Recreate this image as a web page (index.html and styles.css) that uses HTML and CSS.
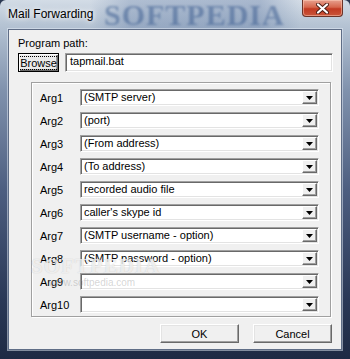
FILE: index.html
```html
<!DOCTYPE html>
<html lang="en">
<head>
<meta charset="UTF-8">
<meta name="viewport" content="width=device-width, initial-scale=1.0">
<title>Mail Forwarding</title>
<link rel="stylesheet" href="styles.css">
</head>
<body>
    <div class="window">
        <div class="titlebar">
            <span class="title">Mail Forwarding</span>
            <span class="title-mark">SOFTPEDIA</span>
            <button class="close" type="button">
                <svg width="13" height="11" viewBox="0 0 13 11">
                    <path d="M2 1.5 L11 9.5 M11 1.5 L2 9.5" stroke="#4a1c14" stroke-width="4" stroke-linecap="round"/>
                    <path d="M2 1.5 L11 9.5 M11 1.5 L2 9.5" stroke="#ffffff" stroke-width="2.2" stroke-linecap="round"/>
                </svg>
            </button>
        </div>

        <div class="client">
            <div class="path-label">Program path:</div>
            <div class="path-row">
                <button class="browse" type="button"><span>Browse</span></button>
                <div class="field">tapmail.bat</div>
            </div>

            <div class="group">
                <div class="arg-row"><span class="arg-label">Arg1</span><div class="combo"><span class="combo-text">(SMTP server)</span><span class="drop"><svg width="7" height="4" viewBox="0 0 7 4"><path d="M0 0 H7 L3.5 4 Z" fill="#000"/></svg></span></div></div>
                <div class="arg-row"><span class="arg-label">Arg2</span><div class="combo"><span class="combo-text">(port)</span><span class="drop"><svg width="7" height="4" viewBox="0 0 7 4"><path d="M0 0 H7 L3.5 4 Z" fill="#000"/></svg></span></div></div>
                <div class="arg-row"><span class="arg-label">Arg3</span><div class="combo"><span class="combo-text">(From address)</span><span class="drop"><svg width="7" height="4" viewBox="0 0 7 4"><path d="M0 0 H7 L3.5 4 Z" fill="#000"/></svg></span></div></div>
                <div class="arg-row"><span class="arg-label">Arg4</span><div class="combo"><span class="combo-text">(To address)</span><span class="drop"><svg width="7" height="4" viewBox="0 0 7 4"><path d="M0 0 H7 L3.5 4 Z" fill="#000"/></svg></span></div></div>
                <div class="arg-row"><span class="arg-label">Arg5</span><div class="combo"><span class="combo-text">recorded audio file</span><span class="drop"><svg width="7" height="4" viewBox="0 0 7 4"><path d="M0 0 H7 L3.5 4 Z" fill="#000"/></svg></span></div></div>
                <div class="arg-row"><span class="arg-label">Arg6</span><div class="combo"><span class="combo-text">caller's skype id</span><span class="drop"><svg width="7" height="4" viewBox="0 0 7 4"><path d="M0 0 H7 L3.5 4 Z" fill="#000"/></svg></span></div></div>
                <div class="arg-row"><span class="arg-label">Arg7</span><div class="combo"><span class="combo-text">(SMTP username - option)</span><span class="drop"><svg width="7" height="4" viewBox="0 0 7 4"><path d="M0 0 H7 L3.5 4 Z" fill="#000"/></svg></span></div></div>
                <div class="arg-row"><span class="arg-label">Arg8</span><div class="combo"><span class="combo-text">(SMTP password - option)</span><span class="drop"><svg width="7" height="4" viewBox="0 0 7 4"><path d="M0 0 H7 L3.5 4 Z" fill="#000"/></svg></span></div></div>
                <div class="arg-row"><span class="arg-label">Arg9</span><div class="combo"><span class="combo-text"></span><span class="drop"><svg width="7" height="4" viewBox="0 0 7 4"><path d="M0 0 H7 L3.5 4 Z" fill="#000"/></svg></span></div></div>
                <div class="arg-row"><span class="arg-label">Arg10</span><div class="combo"><span class="combo-text"></span><span class="drop"><svg width="7" height="4" viewBox="0 0 7 4"><path d="M0 0 H7 L3.5 4 Z" fill="#000"/></svg></span></div></div>
            </div>

            <div class="actions">
                <button class="btn" type="button">OK</button>
                <button class="btn" type="button">Cancel</button>
            </div>

            <!-- site watermark drawn over the dialog -->
            <span class="mark-big">SOFTPEDIA</span>
            <span class="mark-url">www.softpedia.com</span>
        </div>
    </div>
</body>
</html>
```

FILE: styles.css
```css
html, body {
    margin: 0;
    padding: 0;
}

body {
    width: 350px;
    height: 359px;
    overflow: hidden;
    font-family: "Liberation Sans", Arial, sans-serif;
    font-size: 11px;
    color: #000;
    background: #2b3852;
}

.window {
    width: 350px;
    height: 359px;
    box-sizing: border-box;
    padding: 0 8px 9px 8px;
    display: flex;
    flex-direction: column;
    border-radius: 6px 6px 0 0;
    background: linear-gradient(180deg, #d3dce6 0px, #b6c4d4 24px, #8092ad 90px, #4d5e80 190px, #2a3856 300px, #1e2a44 359px);
}

.titlebar {
    position: relative;
    height: 29px;
    display: flex;
    align-items: flex-start;
    background: linear-gradient(90deg, rgba(255, 255, 255, 0) 90px, rgba(70, 100, 150, 0.25) 130px, rgba(70, 100, 150, 0.3) 260px, rgba(255, 255, 255, 0) 300px);
    margin: 0 -8px;
    padding: 0 8px;
}

.title {
    margin-top: 7px;
    font-size: 12px;
    line-height: 14px;
    text-shadow: 0 0 4px #fff, 0 0 8px #fff;
    position: relative;
    z-index: 1;
}

.title-mark {
    position: absolute;
    left: 104px;
    top: 1px;
    font-family: "Liberation Serif", serif;
    font-weight: bold;
    font-size: 30px;
    line-height: 28px;
    letter-spacing: 1px;
    color: rgba(45, 80, 135, 0.45);
    filter: blur(0.8px);
}

.close {
    position: relative;
    margin-left: auto;
    margin-right: -1px;
    width: 41px;
    height: 17px;
    padding: 0;
    display: flex;
    align-items: center;
    justify-content: center;
    border: 1px solid #6b3328;
    border-top: none;
    border-radius: 0 0 4px 4px;
    background: linear-gradient(180deg, #e7a08e 0%, #d6674d 45%, #c23a22 55%, #c9553a 100%);
    box-shadow: inset 0 0 0 1px rgba(255, 210, 190, 0.5);
}

.client {
    position: relative;
    flex: 1;
    box-sizing: border-box;
    padding: 7px 8px 0 9px;
    background: #f0f0f0;
    border: 1px solid #5f6d86;
    box-shadow: 0 0 0 1px rgba(230, 238, 248, 0.5);
}

.path-label {
    line-height: 13px;
}

.path-row {
    display: flex;
    gap: 6px;
    margin-top: 3px;
    height: 19px;
}

.browse {
    width: 41px;
    height: 19px;
    padding: 0;
    font: inherit;
    background: #ebebeb;
    border: 1px solid #000;
    box-shadow: inset 1px 1px 0 #fff, inset -1px -1px 0 #696969, inset -2px -2px 0 #a0a0a0;
}

.browse span {
    outline: 1px dotted #000;
    padding: 0 1px;
}

.field {
    flex: 1;
    box-sizing: border-box;
    height: 19px;
    padding-left: 4px;
    line-height: 15px;
    background: #fff;
    border: 1px solid;
    border-color: #a0a0a0 #fff #fff #a0a0a0;
    box-shadow: inset 1px 1px 0 #696969, inset -1px -1px 0 #e3e3e3;
}

.group {
    box-sizing: border-box;
    height: 235px;
    margin: 10px 2px 0 13px;
    padding: 6px 11px 0 8px;
    border: 1px solid #a0a0a0;
    box-shadow: inset 1px 1px 0 #fff, 1px 1px 0 #fff;
    display: flex;
    flex-direction: column;
    gap: 6px;
}

.arg-row {
    display: grid;
    grid-template-columns: 40px 1fr;
    align-items: center;
    height: 17px;
}

.combo {
    box-sizing: border-box;
    height: 17px;
    display: flex;
    align-items: center;
    padding: 1px;
    background: #fff;
    border: 1px solid;
    border-color: #a0a0a0 #fff #fff #a0a0a0;
    box-shadow: inset 1px 1px 0 #696969, inset -1px -1px 0 #e3e3e3;
}

.combo-text {
    padding-left: 2px;
    line-height: 13px;
    white-space: nowrap;
}

.drop {
    margin-left: auto;
    box-sizing: border-box;
    width: 15px;
    height: 13px;
    display: flex;
    align-items: center;
    justify-content: center;
    background: #f0f0f0;
    border: 1px solid;
    border-color: #fff #696969 #696969 #fff;
    box-shadow: inset -1px -1px 0 #a0a0a0;
}

.actions {
    display: flex;
    justify-content: flex-end;
    gap: 14px;
    margin-top: 7px;
    margin-right: 1px;
}

.btn {
    width: 79px;
    height: 19px;
    padding: 0;
    font: inherit;
    background: #f0f0f0;
    border: 1px solid;
    border-color: #fff #696969 #696969 #fff;
    box-shadow: inset -1px -1px 0 #a0a0a0, inset 1px 1px 0 #e3e3e3;
}

.mark-big {
    position: absolute;
    left: 22px;
    top: 224px;
    font-family: "Liberation Serif", serif;
    font-weight: bold;
    font-size: 21px;
    letter-spacing: 1px;
    color: rgba(255, 255, 255, 0.7);
    text-shadow: 0 0 1px rgba(150, 150, 150, 0.5);
    pointer-events: none;
}

.mark-url {
    position: absolute;
    left: 40px;
    top: 247px;
    font-size: 10px;
    color: rgba(150, 150, 150, 0.4);
    pointer-events: none;
}
```
